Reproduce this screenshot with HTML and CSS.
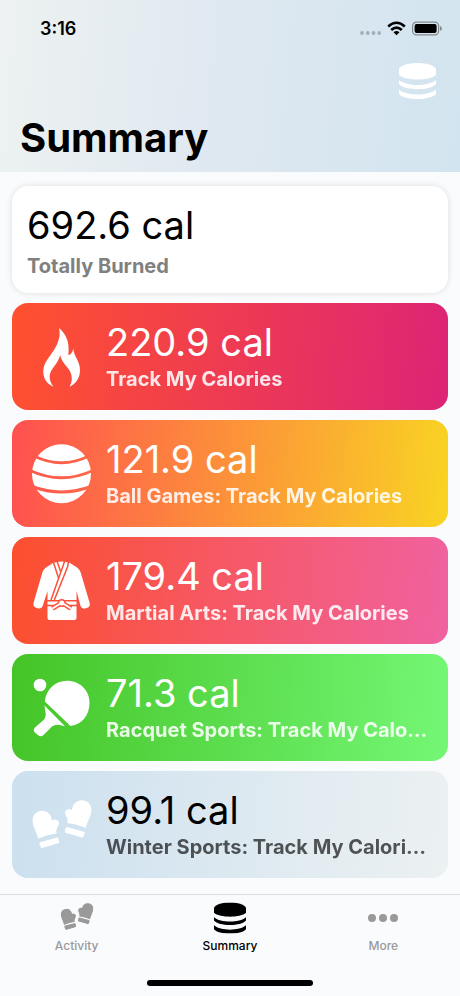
FILE: index.html
```html
<!DOCTYPE html>
<html lang="en">
<head>
<meta charset="utf-8">
<meta name="viewport" content="width=device-width, initial-scale=1">
<title>Summary</title>
<link rel="stylesheet" href="styles.css">
</head>
<body>
<svg class="sprite" aria-hidden="true">
  <symbol id="database" viewBox="0 0 37 36">
    <path d="M0 6C2 2 10 0 18.500 0S35 2 37 6V12C34 15 26 16.500 18.500 16.500S3 15 0 12Z"/>
    <path d="M0 17C4 20.500 11 22 18.500 22S33 20.500 37 17V21C34 24.500 27 26.200 18.500 26.200S3 24.500 0 21Z"/>
    <path d="M0 26.500C4 30 11 31.500 18.500 31.500S33 30 37 26.500V31C34 34.500 27 36 18.500 36S3 34.500 0 31Z"/>
  </symbol>
  <symbol id="mittens" viewBox="0 0 60 60" overflow="visible">
    <g id="mitten">
      <path d="M6.300 43.600C4.800 37 .6 31.500 .6 25.500C.6 19.500 4.500 16.300 9 15.900C15 15.400 19.500 19.300 20 25.800C21.500 24.400 24 24.100 25.700 25.500C27.500 27 27.200 29.300 26 31.300C24.300 34 24.200 36 24.500 38.600Q15 39.500 6.300 43.600Z"/>
      <path d="M8 47.200L25.200 42.600Q26.200 42.400 26.400 43.400L27.200 47Q27.400 48 26.400 48.300L10 53Q9 53.200 8.800 52.200L7.300 48.400Q7.100 47.400 8 47.200Z"/>
    </g>
    <use href="#mitten" transform="translate(60 -10.500) scale(-1 1)"/>
  </symbol>
</svg>

<div class="app">
  <header class="header">
    <div class="status">
      <span class="time">3:16</span>
      <svg class="status-icons" viewBox="0 0 82 16" aria-hidden="true">
        <g fill="#a3afb8"><circle cx="2" cy="12" r="1.900"/><circle cx="7.800" cy="12" r="1.900"/><circle cx="13.500" cy="12" r="1.900"/><circle cx="19.200" cy="12" r="1.900"/></g>
        <g fill="none" stroke="#000" stroke-width="2.600"><path d="M28.200 5.500Q36.500-2 44.800 5.500"/><path d="M31.200 9Q36.500 4.200 41.800 9"/></g>
        <path d="M33.500 11.300Q36.500 8.800 39.500 11.300L36.500 14.200Z"/>
        <rect x="52.600" y="1.100" width="26" height="12.800" rx="3.800" fill="none" stroke="#84898d" stroke-width="1.200"/>
        <rect x="54.600" y="3" width="22" height="9" rx="2"/>
        <path d="M80 5Q82 5.700 82 7.500T80 10Z" fill="#84898d"/>
      </svg>
    </div>
    <button class="data-button" type="button" aria-label="Data"><svg viewBox="0 0 37 36"><use href="#database"/></svg></button>
    <h1>Summary</h1>
  </header>

  <main class="cards">
    <section class="card total">
      <div class="info"><p class="value">692.6 cal</p><p class="label">Totally Burned</p></div>
    </section>
    <section class="card fire">
      <svg class="icon" viewBox="0 0 60 60" aria-hidden="true"><path d="M27 1C34 7 38 15 36.300 28C39 28 40.500 25 41.300 21.500C42 30 48 34 48 43C48 51 44 57 37.500 59.700C42.500 51 38.500 44 35 40C31 35.500 28.800 32 28.300 28C27 33 24 37 21 41C16.500 47 16.500 53 21.500 59.700C14.500 57 11.300 51 11.300 44.500C11.300 36 17 31 22 23C26 16.500 29 9 27 1Z"/></svg>
      <div class="info"><p class="value">220.9 cal</p><p class="label">Track My Calories</p></div>
    </section>
    <section class="card ball">
      <svg class="icon" viewBox="0 0 60 60" aria-hidden="true">
        <mask id="stripes"><rect width="60" height="60" fill="#fff"/><g fill="none" stroke="#000" stroke-width="3"><path d="M2 12Q29.500 25.500 57 12"/><path d="M-2 26.500Q29.500 41 61 26.500"/><path d="M0 42.500Q29.500 53.500 59 42.500"/></g></mask>
        <circle cx="29.500" cy="29.700" r="29.500" mask="url(#stripes)"/>
      </svg>
      <div class="info"><p class="value">121.9 cal</p><p class="label">Ball Games: Track My Calories</p></div>
    </section>
    <section class="card martial">
      <svg class="icon" viewBox="0 0 60 60" aria-hidden="true">
        <mask id="seams"><rect width="60" height="60" fill="#fff"/>
          <g fill="none" stroke="#000" stroke-width="1.500"><path d="M36.700 0L35.500 6L22.300 39"/><path d="M32.700 0L19 39"/><path d="M21 0L26.500 17"/><path d="M25 0L28.600 10.500"/><path d="M14 39.700H46M14 44.600H46"/></g>
        </mask>
        <path mask="url(#seams)" d="M21 2Q29.500-1 38 2L45 6.500Q47.500 8 48.500 11L57.700 42Q58.500 45.500 55.500 46.800L53 47.600Q50 48 48.700 45.500L44.500 30V57Q44.500 59 42.500 59H17.500Q15.500 59 15.500 57V30L10.500 45.500Q9 48 6.500 47.500L3.500 46.500Q1 45.500 1.500 42L10.500 11Q11.500 8 14 6.500Z"/>
        <g class="knot-edge"><path d="M28.500 42.500L20.500 47.500M31 42.500L39 47.500"/><circle cx="29.700" cy="42" r="1.500"/></g>
        <g class="knot"><path d="M28.500 42.500L20.500 47.500M31 42.500L39 47.500"/><circle cx="29.700" cy="42" r="1.500"/></g>
      </svg>
      <div class="info"><p class="value">179.4 cal</p><p class="label">Martial Arts: Track My Calories</p></div>
    </section>
    <section class="card racquet">
      <svg class="icon" viewBox="0 0 60 60" aria-hidden="true"><circle cx="8" cy="7" r="6.300"/><path d="M12.800 23.500C14 11 23.500 2.800 35 2.800C48 2.800 57.500 12.500 57.500 25C57.500 37 50 46.500 38.500 48Z"/><path d="M12.500 27.500L33 48.300C27 46.500 22.500 45.500 19 49.500L11.500 57Q9 59.300 6.500 57.500L2.800 54.500Q.8 52 3 49.500L11.500 42C15.500 38 13 33 12.500 27.500Z"/></svg>
      <div class="info"><p class="value">71.3 cal</p><p class="label">Racquet Sports: Track My Calories</p></div>
    </section>
    <section class="card winter">
      <svg class="icon" viewBox="0 0 60 60" aria-hidden="true"><use href="#mittens"/></svg>
      <div class="info"><p class="value">99.1 cal</p><p class="label">Winter Sports: Track My Calories</p></div>
    </section>
  </main>

  <nav class="tabs" aria-label="Main">
    <a class="tab" href="#activity"><svg class="mittens" viewBox="0 2 60 60" aria-hidden="true"><use href="#mittens" width="60" height="60"/></svg><span>Activity</span></a>
    <a class="tab active" href="#summary" aria-current="page"><svg viewBox="0 0 37 36" aria-hidden="true"><use href="#database"/></svg><span>Summary</span></a>
    <a class="tab" href="#more"><svg viewBox="0 0 32 32" aria-hidden="true"><circle cx="5" cy="16" r="4"/><circle cx="16" cy="16" r="4"/><circle cx="27" cy="16" r="4"/></svg><span>More</span></a>
    <div class="home"></div>
  </nav>
</div>
</body>
</html>
```
FILE: styles.css
```css
* { box-sizing: border-box; }
body { margin: 0; background: #f9fbfd; color: #000; font-family: Inter, "Liberation Sans", sans-serif; }
h1, p { margin: 0; }
.sprite { position: absolute; width: 0; height: 0; }
.app { display: flex; flex-direction: column; min-height: 100vh; }

.header { display: flex; flex-direction: column; padding: 17px 18px 8px 20px; background: linear-gradient(95deg, #edf2f1, #e0e9f1 45%, #d2e4ef); }
.status { display: flex; align-items: center; justify-content: space-between; height: 24px; padding-left: 20px; }
.time { font-size: 18px; font-weight: 600; line-height: 24px; }
.status-icons { width: 82px; height: 16px; }
.data-button { align-self: flex-end; width: 37px; height: 36px; margin: 22px 6px 0 0; padding: 0; border: 0; background: none; fill: #fff; }
.data-button svg { display: block; width: 100%; height: 100%; }
h1 { margin-top: 13px; font-size: 40px; font-weight: 700; line-height: 52px; }

.cards { display: flex; flex: 1; flex-direction: column; gap: 10px; padding: 14px 12px; }
.card { display: flex; align-items: center; gap: 14px; height: 107px; padding: 0 20px; border-radius: 16px; color: #fff; }
.icon { flex: none; width: 60px; height: 60px; fill: #fff; overflow: visible; }
.info { min-width: 0; padding-bottom: 4px; }
.value { font-size: 38px; line-height: 48px; white-space: nowrap; }
.label { overflow: hidden; font-size: 20px; font-weight: 700; line-height: 26px; text-overflow: ellipsis; white-space: nowrap; opacity: .87; }
.total { padding-left: 15px; background: #fff; color: #000; box-shadow: 0 0 6px rgba(0, 0, 0, .12); }
.total .info { padding: 0; }
.total .value { margin-bottom: 4px; }
.total .label { color: #808080; opacity: 1; }
.fire { background: linear-gradient(95deg, #ff512f, #dd2476); }
.ball { background: linear-gradient(95deg, #ff5050, #f9d423); }
.martial { background: linear-gradient(95deg, #fc4f2e, #f062a0); }
.racquet { background: linear-gradient(95deg, #45c427, #74f775); }
.winter { background: linear-gradient(95deg, #cce0ef, #ecf1f2); color: #000; }
.winter .label { opacity: .65; }
.knot { fill: #fff; stroke: #fff; stroke-width: 2; }
.knot-edge { fill: #fa5340; stroke: #fa5340; stroke-width: 5; }

.tabs { display: grid; grid-template-columns: repeat(3, 1fr); padding: 7px 0 10px; border-top: 1px solid #dcdee0; }
.tab { display: flex; flex-direction: column; align-items: center; gap: 3px; color: #999; font-size: 12px; font-weight: 500; line-height: 18px; text-decoration: none; }
.tab svg { width: 32px; height: 32px; fill: #999; overflow: visible; }
.tab .mittens { stroke: #999; stroke-width: 2; }
.tab.active { color: #000; }
.tab.active svg { fill: #000; }
.home { grid-column: 1 / -1; justify-self: center; width: 36%; height: 6px; margin-top: 25px; border-radius: 3px; background: #000; }
```
